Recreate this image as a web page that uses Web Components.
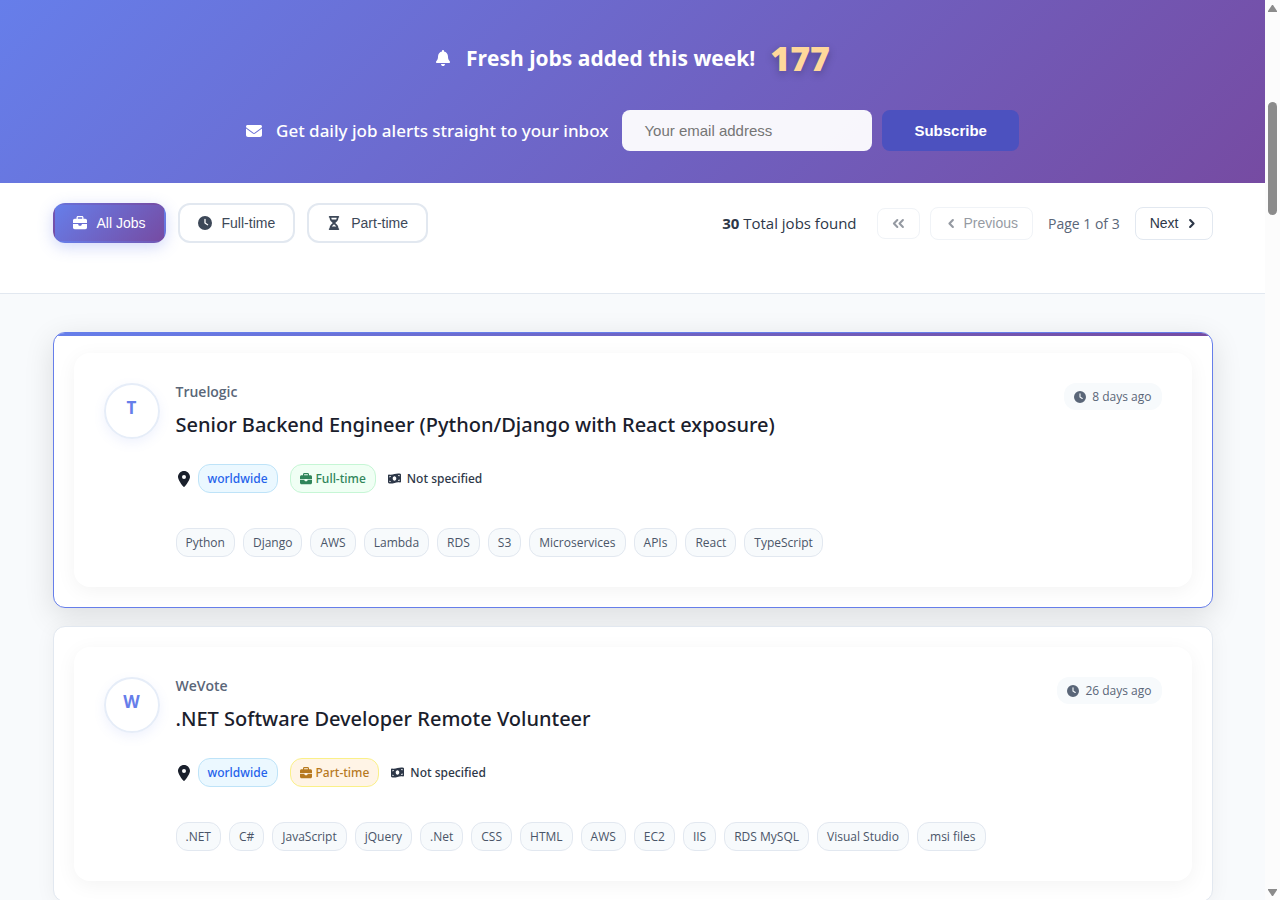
<!DOCTYPE html>
<html lang="en">
<head>
<meta charset="utf-8">
<meta name="viewport" content="width=device-width, initial-scale=1">
<title>Remote Jobs</title>
<style>
  body {
    margin: 0;
    font-family: "Open Sans", "Noto Sans", sans-serif;
    color: #2d3748;
  }
</style>
</head>
<body>

<page-frame>
  <alert-banner count="177">
    <span slot="headline">Fresh jobs added this week!</span>
    <span slot="prompt">Get daily job alerts straight to your inbox</span>
  </alert-banner>

  <filter-bar>
    <filter-button icon="briefcase" active>All Jobs</filter-button>
    <filter-button icon="clock">Full-time</filter-button>
    <filter-button icon="hourglass">Part-time</filter-button>
    <job-pager slot="pager" total="30" page="1" pages="3"></job-pager>
  </filter-bar>

  <job-list>
    <job-card featured company="Truelogic" kind="Full-time" location="worldwide" salary="Not specified" posted="8 days ago"
      skills="Python,Django,AWS,Lambda,RDS,S3,Microservices,APIs,React,TypeScript">Senior Backend Engineer (Python/Django with React exposure)</job-card>
    <job-card company="WeVote" kind="Part-time" location="worldwide" salary="Not specified" posted="26 days ago"
      skills=".NET,C#,JavaScript,jQuery,.Net,CSS,HTML,AWS,EC2,IIS,RDS MySQL,Visual Studio,.msi files">.NET Software Developer Remote Volunteer</job-card>
  </job-list>
</page-frame>

<script>
const ICONS = {
  bell: ["0 0 448 512", `<path d="M224 0c-17.7 0-32 14.3-32 32V51.2C119 66 64 130.6 64 208v18.8c0 47-17.3 92.4-48.5 127.6l-7.4 8.3c-8.4 9.4-10.4 22.9-5.3 34.4S19.4 416 32 416H416c12.6 0 24-7.4 29.2-18.9s3.1-25-5.3-34.4l-7.4-8.3C401.3 319.2 384 273.9 384 226.8V208c0-77.4-55-142-128-156.8V32c0-17.7-14.3-32-32-32zm45.3 493.3c12-12 18.7-28.3 18.7-45.3H224 160c0 17 6.7 33.3 18.7 45.3s28.3 18.7 45.3 18.7s33.3-6.7 45.3-18.7z"/>`],
  envelope: ["0 0 512 512", `<path d="M48 64C21.5 64 0 85.5 0 112c0 15.1 7.1 29.3 19.2 38.4L236.8 313.6c11.4 8.5 27 8.5 38.4 0L492.8 150.4c12.1-9.1 19.2-23.3 19.2-38.4c0-26.5-21.5-48-48-48H48zM0 176V384c0 35.3 28.7 64 64 64H448c35.3 0 64-28.7 64-64V176L294.4 339.2c-22.8 17.1-54 17.1-76.8 0L0 176z"/>`],
  briefcase: ["0 0 512 512", `<path d="M184 48H328c4.4 0 8 3.6 8 8V96H176V56c0-4.4 3.6-8 8-8zm-56 8V96H64C28.7 96 0 124.7 0 160v96H192 320 512V160c0-35.3-28.7-64-64-64H384V56c0-30.9-25.1-56-56-56H184c-30.9 0-56 25.1-56 56zM512 288H320v32c0 17.7-14.3 32-32 32H224c-17.7 0-32-14.3-32-32V288H0V416c0 35.3 28.7 64 64 64H448c35.3 0 64-28.7 64-64V288z"/>`],
  clock: ["0 0 512 512", `<path fill-rule="evenodd" d="M256 0a256 256 0 1 1 0 512A256 256 0 1 1 256 0zM232 120V256c0 8 4 15.5 10.7 20l96 64c11 7.4 25.9 4.4 33.3-6.7s4.4-25.9-6.7-33.3L280 243.2V120c0-13.3-10.7-24-24-24s-24 10.7-24 24z"/>`],
  hourglass: ["0 0 384 512", `<path fill-rule="evenodd" d="M32 0C14.3 0 0 14.3 0 32S14.3 64 32 64V75c0 42.4 16.9 83.1 46.9 113.1L146.7 256 78.9 323.9C48.9 353.9 32 394.6 32 437v11c-17.7 0-32 14.3-32 32s14.3 32 32 32H352c17.7 0 32-14.3 32-32s-14.3-32-32-32V437c0-42.4-16.9-83.1-46.9-113.1L237.3 256l67.9-67.9c30-30 46.9-70.7 46.9-113.1V64c17.7 0 32-14.3 32-32s-14.3-32-32-32H32zM96 75V64H288V75c0 19-5.6 37.4-16 53H112c-10.3-15.6-16-34-16-53zm16 309c3.5-5.3 7.6-10.3 12.1-14.9L192 301.3l67.9 67.9c4.6 4.6 8.6 9.6 12.1 14.9H112z"/>`],
  pin: ["0 0 384 512", `<path fill-rule="evenodd" d="M215.7 499.2C267 435 384 279.4 384 192C384 86 298 0 192 0S0 86 0 192c0 87.4 117 243 168.3 307.2c12.3 15.3 35.1 15.3 47.4 0zM192 128a64 64 0 1 1 0 128 64 64 0 1 1 0-128z"/>`],
  money: ["0 0 576 512", `<path fill-rule="evenodd" d="M0 112.5V422.3c0 18 10.1 35 27 41.3c87 32.5 174 10.3 261-11.9c79.8-20.3 159.6-40.7 239.3-18.9c23 6.3 48.7-9.5 48.7-33.4V89.7c0-18-10.1-35-27-41.3C462 15.9 375 38.1 288 60.3C208.2 80.6 128.4 100.9 48.7 79.1C25.6 72.8 0 88.6 0 112.5zM288 352c-44.2 0-80-43-80-96s35.8-96 80-96s80 43 80 96s-35.8 96-80 96zM64 352c35.3 0 64 28.7 64 64H64V352zm64-208c0 35.3-28.7 64-64 64V144h64zM512 304v64H448c0-35.3 28.7-64 64-64zM448 96h64v64c-35.3 0-64-28.7-64-64z"/>`],
  left: ["0 0 512 512", `<path d="M310 120 175 256l135 136" fill="none" stroke="currentColor" stroke-width="84" stroke-linecap="round" stroke-linejoin="round"/>`],
  right: ["0 0 512 512", `<path d="M202 120l135 136-135 136" fill="none" stroke="currentColor" stroke-width="84" stroke-linecap="round" stroke-linejoin="round"/>`],
  first: ["0 0 512 512", `<path d="M210 120 75 256l135 136M430 120 295 256l135 136" fill="none" stroke="currentColor" stroke-width="80" stroke-linecap="round" stroke-linejoin="round"/>`],
};

function attach(host, html) {
  const template = document.createElement("template");
  template.innerHTML = html;
  host.attachShadow({ mode: "open" }).append(template.content.cloneNode(true));
}

class UiIcon extends HTMLElement {
  constructor() {
    super();
    this.attachShadow({ mode: "open" });
  }

  connectedCallback() {
    const [viewBox, shape] = ICONS[this.getAttribute("name")];
    this.shadowRoot.innerHTML = `
  <style>
    :host { display: inline-flex; flex: none; width: 14px; height: 14px; }
    svg { width: 100%; height: 100%; fill: currentColor; }
  </style>
  <svg viewBox="${viewBox}" aria-hidden="true">${shape}</svg>`;
  }
}

class PageFrame extends HTMLElement {
  constructor() {
    super();
    attach(this, `
  <style>
    :host {
      display: grid;
      grid-template-columns: minmax(0, 1fr) 15px;
      height: 100vh;
      background: #f8fafc;
    }
    main { overflow-y: auto; scrollbar-width: none; }
  </style>
  <main><slot></slot></main>
  <scroll-rail></scroll-rail>`);
  }
}

class ScrollRail extends HTMLElement {
  constructor() {
    super();
    attach(this, `
  <style>
    :host {
      display: flex;
      flex-direction: column;
      align-items: center;
      box-sizing: border-box;
      padding: 5px 0 4px;
      background: #fcfcfc;
      color: #8b8b8b;
    }
    svg { width: 9px; height: 7px; fill: currentColor; flex: none; }
    .track { flex: 1; display: flex; flex-direction: column; align-items: center; padding-top: 2px; }
    .track::before { content: ""; flex: 0 0 10%; }
    .thumb { width: 9px; flex: 0 0 13%; border-radius: 5px; background: currentColor; }
  </style>
  <svg viewBox="0 0 9 7"><path d="M4 0h1l4 6v1H0V6z"/></svg>
  <div class="track"><div class="thumb"></div></div>
  <svg viewBox="0 0 9 7"><path d="M4 7h1l4-6V0H0v1z"/></svg>`);
  }
}

class AlertBanner extends HTMLElement {
  constructor() {
    super();
    attach(this, `
  <style>
    :host {
      display: block;
      padding: 32px 20px;
      background: linear-gradient(135deg, #667eea 0%, #764ba2 100%);
      color: #fff;
    }
    .headline, form { display: flex; align-items: center; justify-content: center; }
    .headline { gap: 15px; margin: 0 0 26px; font-size: 21px; line-height: 52px; font-weight: 700; }
    .headline ui-icon { width: 16px; height: 16px; }
    .count {
      color: #ffd89b;
      font-size: 34px;
      font-weight: 800;
      text-shadow: 0 3px 8px rgba(0, 0, 0, .25);
    }
    form { gap: 14px; }
    form ui-icon { width: 16px; height: 16px; }
    label { font-family: "Noto Sans", "Open Sans", sans-serif; font-size: 17px; font-weight: 500; }
    .fields { display: flex; gap: 10px; }
    input, button {
      box-sizing: border-box;
      height: 41px;
      border: 0;
      border-radius: 8px;
      font: 15px "Liberation Sans", Arial, sans-serif;
    }
    input { width: 250px; padding: 0 22px; background: rgba(255, 255, 255, .95); color: #2d3748; }
    input::placeholder { color: #757575; }
    button { padding: 0 32px; background: #4c51bf; color: #fff; font-weight: 700; }
  </style>
  <h2 class="headline"><ui-icon name="bell"></ui-icon><slot name="headline"></slot><span class="count"></span></h2>
  <form>
    <ui-icon name="envelope"></ui-icon>
    <label for="email"><slot name="prompt"></slot></label>
    <div class="fields">
      <input id="email" type="email" placeholder="Your email address">
      <button type="button">Subscribe</button>
    </div>
  </form>`);
  }

  connectedCallback() {
    this.shadowRoot.querySelector(".count").textContent = this.getAttribute("count");
  }
}

class FilterBar extends HTMLElement {
  constructor() {
    super();
    attach(this, `
  <style>
    :host { display: block; background: #fff; border-bottom: 1px solid #e2e8f0; }
    .inner {
      display: flex;
      justify-content: space-between;
      align-items: center;
      box-sizing: border-box;
      max-width: 1200px;
      margin: 0 auto;
      padding: 20px 20px 50px;
    }
    .filters { display: flex; gap: 12px; }
  </style>
  <div class="inner">
    <div class="filters"><slot></slot></div>
    <slot name="pager"></slot>
  </div>`);
  }
}

class FilterButton extends HTMLElement {
  constructor() {
    super();
    attach(this, `
  <style>
    :host { display: block; }
    button {
      display: flex;
      align-items: center;
      gap: 10px;
      box-sizing: border-box;
      height: 40px;
      padding: 0 18px;
      border: 2px solid #e2e8f0;
      border-radius: 12px;
      background: #fff;
      color: #3d4858;
      font: 14px "Liberation Sans", Arial, sans-serif;
    }
    :host([active]) button {
      border-color: transparent;
      background: linear-gradient(135deg, #667eea 0%, #764ba2 100%);
      color: #fff;
      box-shadow: 0 4px 15px rgba(102, 126, 234, .3);
    }
  </style>
  <button type="button"><ui-icon name="${this.getAttribute("icon")}"></ui-icon><slot></slot></button>`);
  }
}

class JobPager extends HTMLElement {
  constructor() {
    super();
    attach(this, `
  <style>
    :host { display: flex; align-items: center; gap: 20px; font-size: 15px; }
    b { font-weight: 700; }
    nav { display: flex; align-items: center; gap: 15px; color: #5a6678; font-size: 14px; }
    .back { display: flex; align-items: center; gap: 10px; }
    button {
      display: flex;
      align-items: center;
      gap: 6px;
      box-sizing: border-box;
      height: 33px;
      padding: 0 14px;
      border: 1px solid #e2e8f0;
      border-radius: 8px;
      background: #fff;
      color: #2d3748;
      font: 14px "Liberation Sans", Arial, sans-serif;
    }
    button:disabled { opacity: .5; }
    ui-icon { width: 13px; height: 13px; }
    .first { height: 31px; }
  </style>
  <span><b>${this.getAttribute("total")}</b> Total jobs found</span>
  <nav aria-label="Pages">
    <div class="back">
      <button class="first" type="button" aria-label="First page" disabled><ui-icon name="first"></ui-icon></button>
      <button type="button" disabled><ui-icon name="left"></ui-icon>Previous</button>
    </div>
    <span>Page ${this.getAttribute("page")} of ${this.getAttribute("pages")}</span>
    <button type="button">Next<ui-icon name="right"></ui-icon></button>
  </nav>`);
  }
}

class JobList extends HTMLElement {
  constructor() {
    super();
    attach(this, `
  <style>
    :host {
      display: flex;
      flex-direction: column;
      gap: 18px;
      box-sizing: border-box;
      max-width: 1200px;
      margin: 0 auto;
      padding: 38px 20px;
    }
  </style>
  <slot></slot>`);
  }
}

class SkillTag extends HTMLElement {
  constructor() {
    super();
    attach(this, `
  <style>
    :host {
      display: block;
      padding: 0 9px;
      border: 1px solid #e2e8f0;
      border-radius: 12px;
      background: #f7fafc;
      color: #4a5568;
      font-size: 12px;
      line-height: 27px;
    }
  </style>
  <slot></slot>`);
  }
}

class JobCard extends HTMLElement {
  constructor() {
    super();
    const get = (name) => this.getAttribute(name);
    const kindClass = get("kind") === "Part-time" ? "part" : "full";
    attach(this, `
  <style>
    :host {
      display: block;
      position: relative;
      overflow: hidden;
      padding: 20px;
      border: 1px solid #e2e8f0;
      border-radius: 12px;
      background: #fff;
      box-shadow: 0 2px 20px rgba(0, 0, 0, .05);
    }
    :host([featured]) { border-color: #667eea; box-shadow: 0 8px 30px rgba(0, 0, 0, .12); }
    :host([featured])::before {
      content: "";
      position: absolute;
      inset: 0 0 auto;
      height: 3px;
      background: linear-gradient(90deg, #667eea, #764ba2);
    }
    article {
      display: flex;
      align-items: flex-start;
      gap: 16px;
      padding: 30px;
      border-radius: 16px;
      background: #fff;
      box-shadow: 0 4px 20px rgba(0, 0, 0, .05);
    }
    .logo {
      flex: none;
      box-sizing: border-box;
      width: 56px;
      height: 56px;
      border: 2px solid #e6edf8;
      border-radius: 50%;
      color: #667eea;
      font-size: 17px;
      font-weight: 700;
      line-height: 46px;
      text-align: center;
      box-shadow: 0 4px 12px rgba(102, 126, 234, .1);
    }
    .body { flex: 1; min-width: 0; }
    header { display: flex; justify-content: space-between; align-items: flex-start; }
    .company { color: #5a6678; font-size: 14px; font-weight: 600; line-height: 18px; }
    h3 {
      margin: 8px 0 24px;
      color: #1a202c;
      font-family: "Noto Sans", "Open Sans", sans-serif;
      font-size: 20px;
      font-weight: 500;
      line-height: 31px;
    }
    time {
      display: flex;
      align-items: center;
      gap: 6px;
      padding: 0 10px;
      border-radius: 12px;
      background: #f7fafc;
      color: #5a6678;
      font-size: 12px;
      line-height: 27px;
    }
    time ui-icon { width: 12px; height: 12px; }
    .meta {
      display: flex;
      align-items: center;
      gap: 12px;
      margin-bottom: 35px;
      font-family: "Noto Sans", "Open Sans", sans-serif;
      font-size: 12px;
      font-weight: 500;
    }
    .place, .salary { display: flex; align-items: center; gap: 6px; }
    .place { color: #1a202c; }
    .place ui-icon { width: 16px; height: 16px; }
    .salary ui-icon { width: 13px; height: 13px; }
    .pill {
      display: flex;
      align-items: center;
      gap: 4px;
      padding: 0 9px;
      border: 1px solid #bee3f8;
      border-radius: 12px;
      background: #ebf8ff;
      color: #2563eb;
      line-height: 27px;
    }
    .pill ui-icon { width: 12px; height: 12px; }
    .full { border-color: #c6f6d5; background: #f0fff4; color: #2f855a; }
    .part { border-color: #faf089; background: #fff4e6; color: #b7791f; }
    .skills { display: flex; flex-wrap: wrap; gap: 8px; }
  </style>
  <article>
    <div class="logo">${get("company")[0]}</div>
    <div class="body">
      <header>
        <div>
          <div class="company">${get("company")}</div>
          <h3><slot></slot></h3>
        </div>
        <time><ui-icon name="clock"></ui-icon>${get("posted")}</time>
      </header>
      <div class="meta">
        <span class="place"><ui-icon name="pin"></ui-icon><span class="pill">${get("location")}</span></span>
        <span class="pill ${kindClass}"><ui-icon name="briefcase"></ui-icon>${get("kind")}</span>
        <span class="salary"><ui-icon name="money"></ui-icon>${get("salary")}</span>
      </div>
      <div class="skills">${get("skills").split(",").map((skill) => `<skill-tag>${skill}</skill-tag>`).join("")}</div>
    </div>
  </article>`);
  }
}

customElements.define("ui-icon", UiIcon);
customElements.define("scroll-rail", ScrollRail);
customElements.define("page-frame", PageFrame);
customElements.define("alert-banner", AlertBanner);
customElements.define("filter-bar", FilterBar);
customElements.define("filter-button", FilterButton);
customElements.define("job-pager", JobPager);
customElements.define("job-list", JobList);
customElements.define("skill-tag", SkillTag);
customElements.define("job-card", JobCard);
</script>
</body>
</html>
